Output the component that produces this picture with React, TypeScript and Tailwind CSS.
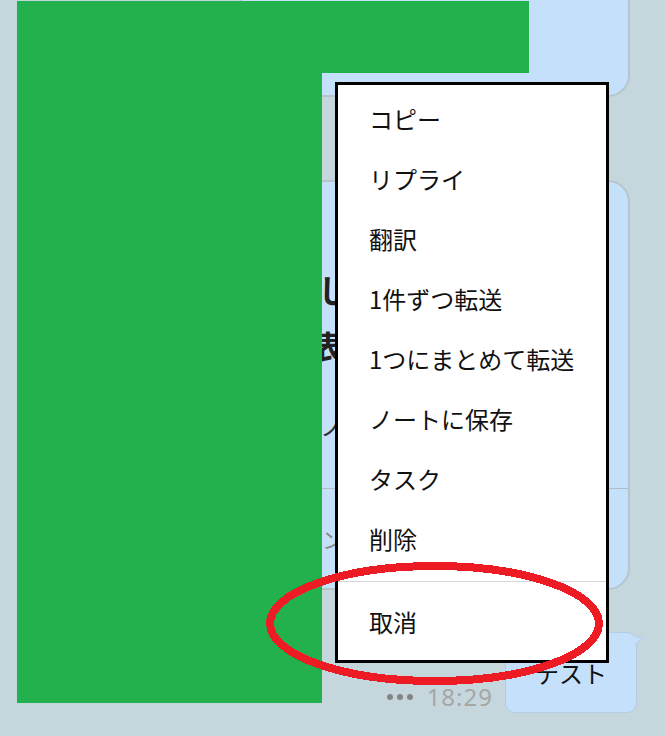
import React from "react";

const menuItems = [
  "コピー",
  "リプライ",
  "翻訳",
  "1件ずつ転送",
  "1つにまとめて転送",
  "ノートに保存",
  "タスク",
  "削除",
];

const jp = { fontFamily: '"Noto Sans CJK JP", "Noto Sans", sans-serif' };

const ContextMenu = () => {
  return (
    <div
      className="absolute left-[335px] top-[82px] w-[274px] border-[3px] border-black bg-white pt-[4px] pb-[8px]"
      style={jp}
    >
      {menuItems.map((label) => (
        <div key={label} className="flex h-[60px] items-center pl-[31px] text-[24px] text-[#111]">
          {label}
        </div>
      ))}
      <div className="mt-[12px] h-px bg-[#d6d6d6]" />
      <div className="mt-[10px] flex h-[60px] items-center pl-[31px] text-[24px] text-[#111]">取消</div>
    </div>
  );
};

export default function App() {
  return (
    <main className="relative h-[736px] w-[665px] overflow-hidden bg-[#c5d7dd]" style={jp}>
      <div className="flex flex-col items-end">
        {/* top bubble, mostly off screen */}
        <div className="-mt-[20px] mr-[35px] h-[117px] w-[390px] rounded-[22px] border-2 border-[#b5c5cb] bg-[#c5e0fb]" />

        {/* rich message bubble (hidden behind the menu) */}
        <div className="mt-[83px] mr-[35px] w-[390px] rounded-[22px] border-2 border-[#b5c5cb] bg-[#c5e0fb] text-[#222]">
          <div className="h-[79px]" />
          <div className="pl-[76px] text-[32px] font-bold leading-[56px]">し</div>
          <div className="pl-[70px] text-[32px] font-bold leading-[56px]">表</div>
          <div className="mt-[35px] pl-[78px] text-[24px] leading-[36px] text-[#333]">ノ</div>
          <div className="mt-[44px] flex h-[100px] items-center border-t border-[#aebdc8] pl-[58px] text-[22px] text-[#888]">
            コン
          </div>
        </div>

        {/* last message row */}
        <div className="mt-[42px] mr-[28px] flex items-end gap-[12px]">
          <div className="mb-[4px] flex items-center gap-[14px]">
            <div className="flex items-center gap-[4px]">
              <span className="h-[6px] w-[6px] rounded-full bg-[#858585]" />
              <span className="h-[6px] w-[6px] rounded-full bg-[#858585]" />
              <span className="h-[6px] w-[6px] rounded-full bg-[#858585]" />
            </div>
            <span
              className="text-[24px] leading-none tracking-[1px] text-[#a6a6a6]"
              style={{ fontFamily: '"Noto Sans", sans-serif' }}
            >
              18:29
            </span>
          </div>
          <div className="relative flex h-[81px] w-[132px] items-center justify-center rounded-[10px] border border-[#b3cde3] bg-[#c5e0fb] text-[24px] text-[#111]">
            テスト
            <svg className="absolute -right-[8px] top-[3px]" width="10" height="12" viewBox="0 0 10 12">
              <path d="M0 0 L9 2 L0 10 Z" fill="#c5e0fb" />
              <path d="M1 0.5 L9 2 L1 9" fill="none" stroke="#b3cde3" strokeWidth="1" />
            </svg>
          </div>
        </div>
      </div>

      {/* redaction block */}
      <div className="absolute left-[17px] top-[1px] h-[72px] w-[512px] bg-[#22b14c]" />
      <div className="absolute left-[17px] top-[73px] h-[630px] w-[305px] bg-[#22b14c]" />

      <ContextMenu />

      {/* annotation */}
      <svg className="pointer-events-none absolute left-0 top-0" width="665" height="736" shapeRendering="crispEdges">
        <ellipse cx="434.5" cy="623.5" rx="164.5" ry="57.5" fill="none" stroke="#ed1c24" strokeWidth="8" />
      </svg>
    </main>
  );
}
